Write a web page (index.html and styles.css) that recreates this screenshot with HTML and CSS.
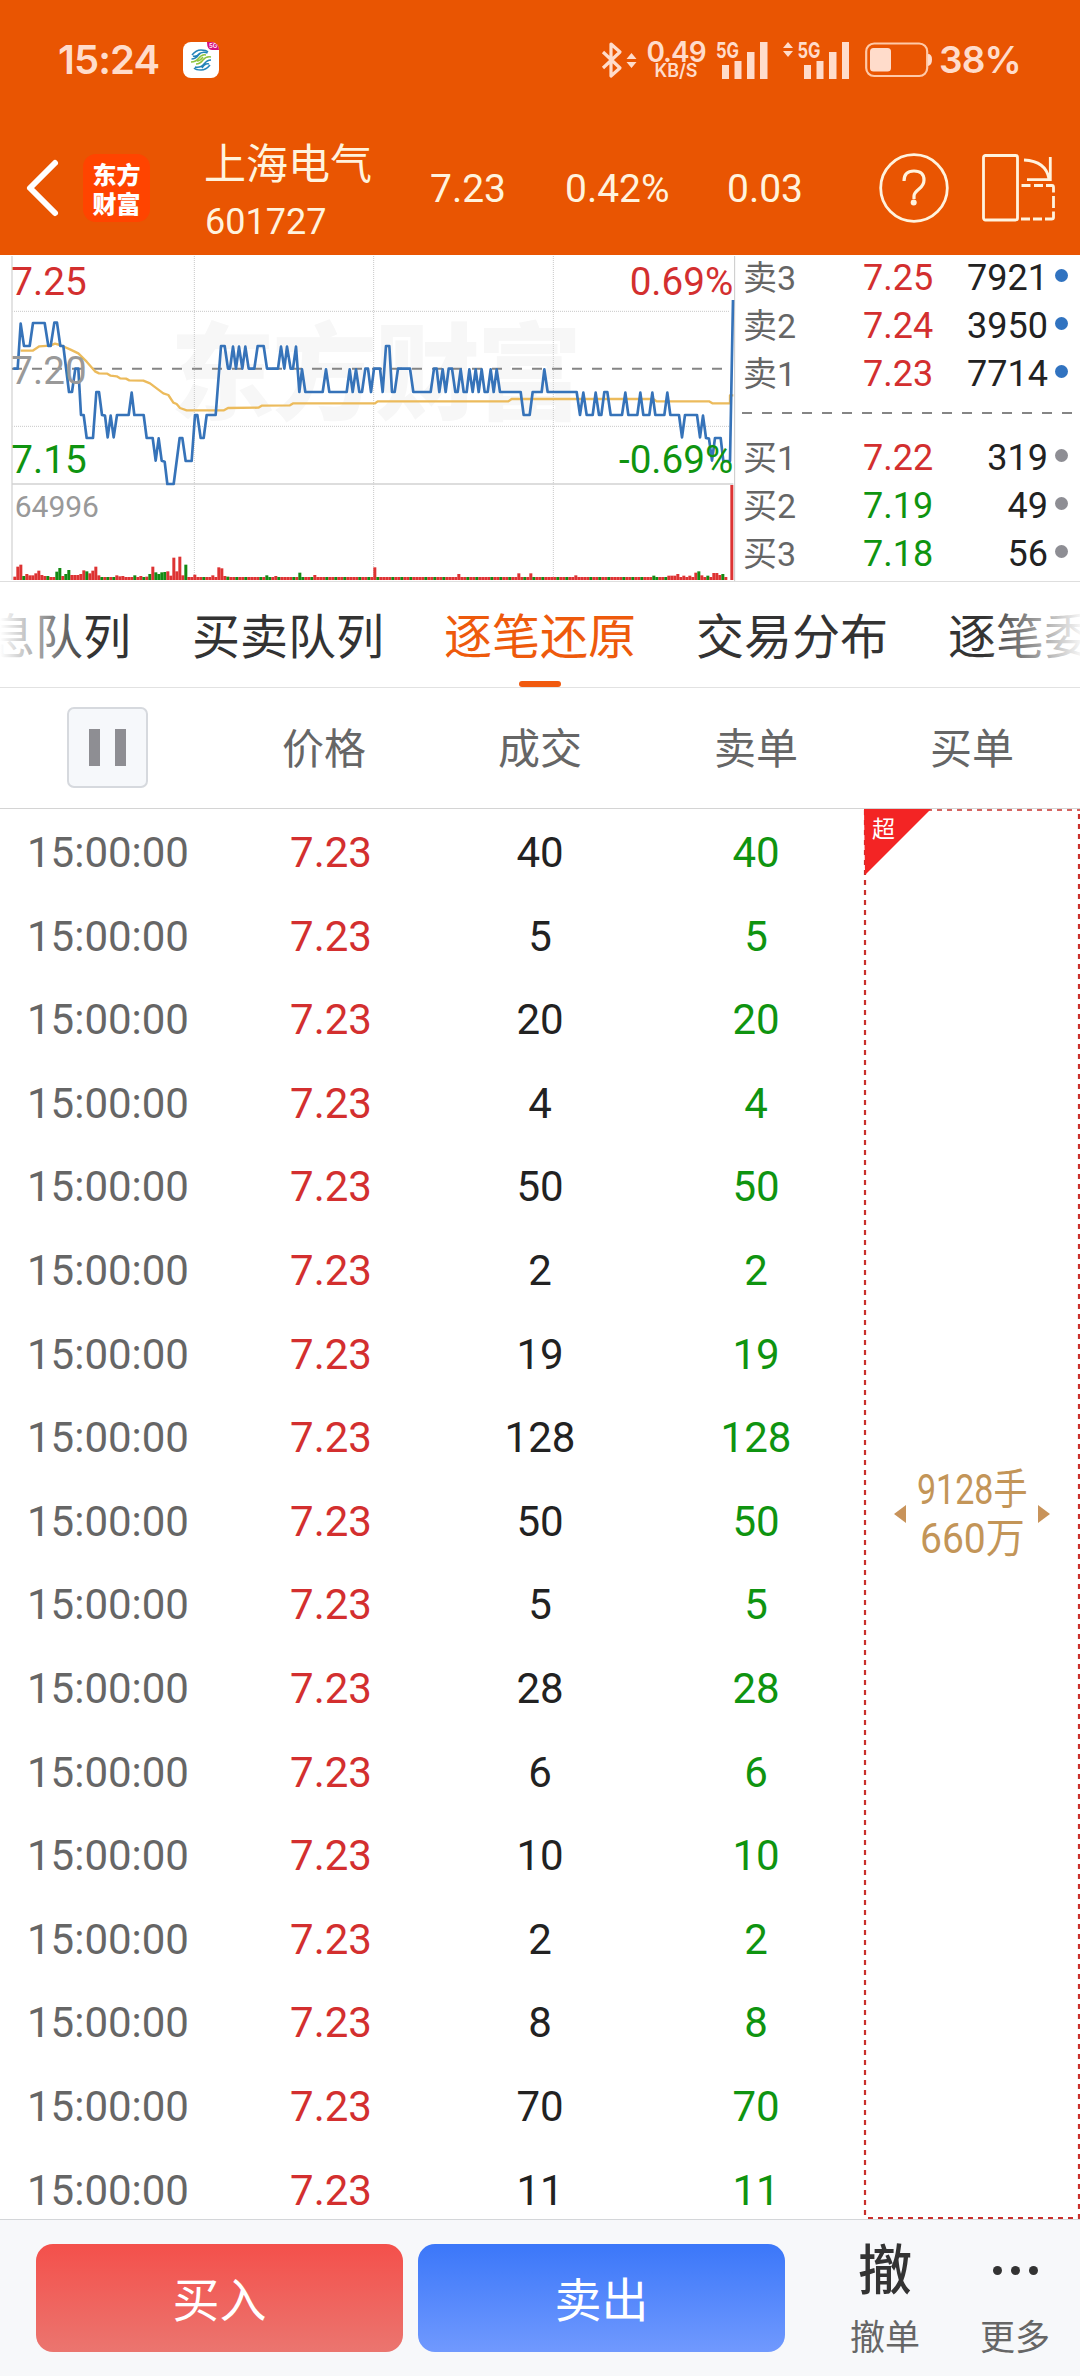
FILE: index.html
```html
<!DOCTYPE html>
<html lang="zh-CN">
<head>
    <meta charset="utf-8">
    <title>上海电气 601727</title>
    <link rel="stylesheet" href="styles.css">
</head>
<body>
    <div class="top">
        <div class="status-bar">
            <span class="clock">15:24</span>
            <svg class="app-icon" width="36" height="36" viewBox="0 0 36 36">
                <defs><clipPath id="appClip"><rect width="36" height="36" rx="8"/></clipPath></defs>
                <g clip-path="url(#appClip)">
                    <rect width="36" height="36" fill="#fff"/>
                    <path d="M24 0h12v8H29q-5 0-5-8z" fill="#d6107c"/>
                    <text x="26" y="6" font-size="6" fill="#fff">5G</text>
                </g>
                <g fill="none" stroke-width="1.5">
                    <path d="M9 13q4-5 9-5 5 0 7 2M8.500 17q4 0 7-4t9-2M10 14q4 1 7-3" stroke="#2384b8"/>
                    <path d="M8 20q5 0 8-4t7-3M13 22q4 0 7-4t8-3M14 19q3 0 6-4" stroke="#8fc440"/>
                    <path d="M27 23q-4 5-9 5-5 0-7-2M28 18q-4 0-7 4t-9 3M26 22q-4-1-7 4" stroke="#2384b8"/>
                </g>
            </svg>
            <div class="status-right">
                <svg class="bt" width="36" height="38" viewBox="0 0 36 38">
                    <path d="M2 11l17 16-9 8V3l9 8L2 27" fill="none" stroke="#ffdccb" stroke-width="3.200" stroke-linejoin="round"/>
                    <path d="M25.500 18h10l-5-6zM25.500 21h10l-5 6z" fill="#ffdccb"/>
                </svg>
                <div class="net">
                    <span class="net-num">0.49</span>
                    <span class="net-unit">KB/S</span>
                </div>
                <svg class="sig1" width="52" height="38" viewBox="0 0 52 38">
                    <text class="sig-text" x="0" y="16.500" textLength="23" lengthAdjust="spacingAndGlyphs">5G</text>
                    <path d="M6 24h7v14H6zM18.500 20h7v18h-7zM31 11h7.500v27H31zM44 1h7.500v37H44z"/>
                </svg>
                <svg class="sig2" width="68" height="38" viewBox="0 0 68 38">
                    <path d="M1 7h10L6 1zM1 10h10l-5 6z"/>
                    <text class="sig-text" x="15.500" y="16.500" textLength="23" lengthAdjust="spacingAndGlyphs">5G</text>
                    <path d="M22 24h7v14h-7zM34.500 20h7v18h-7zM47 11h7.500v27H47zM60 1h7v37h-7z"/>
                </svg>
                <svg class="battery" width="68" height="36" viewBox="0 0 68 36">
                    <rect x="1.200" y="1.500" width="61" height="32.500" rx="8" fill="none" stroke="#ffc9a8" stroke-width="2.200"/>
                    <rect x="5" y="6" width="21" height="23.500" rx="3.500"/>
                    <path d="M63 12q4 0 4 5.500T63 24z"/>
                </svg>
                <span class="percent">38%</span>
            </div>
        </div>
        <div class="header">
            <svg class="back" width="34" height="60" viewBox="0 0 34 60">
                <path d="M30 5L5 30l25 25" fill="none" stroke="#fff" stroke-width="6" stroke-linecap="round" stroke-linejoin="round"/>
            </svg>
            <div class="logo">
                <div>东方</div>
                <div>财富</div>
            </div>
            <div class="stock">
                <div class="stock-name">上海电气</div>
                <div class="stock-code">601727</div>
            </div>
            <span class="quote q-price">7.23</span>
            <span class="quote q-rate">0.42%</span>
            <span class="quote q-diff">0.03</span>
            <svg class="help" width="70" height="70" viewBox="0 0 70 70">
                <circle cx="35" cy="35" r="33.300" fill="none" stroke="#fff3de" stroke-width="2.800"/>
                <path d="M25 28q0-10 10-10t10 9q0 5-5 9t-5 7v3" fill="none" stroke="#fff3de" stroke-width="3.200"/>
                <circle cx="34.700" cy="49.500" r="3" fill="#fff3de"/>
            </svg>
            <svg class="rotate" width="74" height="68" viewBox="0 0 74 68" fill="none" stroke="#fff3de" stroke-width="2.800">
                <rect x="1.500" y="1.500" width="34" height="64.500" rx="2"/>
                <path d="M42 6q22 1 25 19M68.300 3v22.700H45"/>
                <path d="M39.500 31.500h9M52 31.500h9M64 31.500h6q1.500 0 1.500 2v5M71.500 42v12M71.500 57.500v6q0 1.500-2 1.500H63M60 65h-9M48 65h-9"/>
            </svg>
        </div>
    </div>

    <div class="market">
        <!-- 分时图，坐标放大3倍 -->
        <svg class="chart" width="738" height="326" viewBox="0 15 2214 978">
            <text class="watermark" x="510" y="483" textLength="1236">东方财富</text>
            <g stroke="#c8c8c8" stroke-width="3" stroke-dasharray="3 3">
                <path d="M36 184H2190M36 529H2190M583 18V990M1121 18V990M1660 18V990"/>
            </g>
            <path d="M36 18V990" stroke="#dedede" stroke-width="5"/>
            <path d="M2204 18V993" stroke="#c8c8c8" stroke-width="3"/>
            <path d="M36 702H2200" stroke="#d2d2d2" stroke-width="5"/>
            <path d="M36 356H2180" stroke="#858585" stroke-width="6" stroke-dasharray="30 30"/>
            <polyline class="avg" points="62,302 98,302 118,289 150,287 165,281 180,285 210,298 235,310 260,335 285,364 297,370 322,371 332,377 350,379 360,385 378,386 388,391 430,392 450,400 490,430 505,435 520,458 530,462 540,474 560,481 672,481 684,474 775,473 785,467 870,466 880,460 1125,460 1133,454 1525,454 1535,447 1960,447 1970,454 2127,454 2137,460 2190,460 2190,436 2200,436"/>
            <polyline class="price" points="40,356 53,356 62,221 72,288 89,288 99,219 134,219 145,288 152,288 163,218 171,218 181,288 190,288 207,426 216,426 226,356 235,356 243,495 251,495 260,564 279,564 289,426 297,426 306,495 315,497 323,562 332,497 341,562 351,495 386,495 395,428 403,495 431,495 440,564 458,564 467,632 476,565 485,632 494,635 502,702 521,702 539,564 547,564 557,633 575,633 585,495 592,495 602,564 611,564 620,495 647,495 663,288 674,288 684,356 690,356 699,290 708,356 717,290 727,356 736,290 746,356 763,356 773,288 791,288 801,356 834,356 843,290 853,356 861,290 872,356 879,356 888,290 898,426 906,358 916,426 968,426 978,358 988,426 1040,426 1049,358 1058,426 1068,358 1078,426 1086,426 1096,356 1104,356 1113,426 1122,356 1140,356 1148,426 1158,288 1168,288 1176,426 1184,426 1194,356 1230,356 1240,426 1292,426 1302,356 1310,356 1318,426 1328,358 1337,426 1346,356 1356,356 1366,426 1373,426 1382,358 1391,426 1400,426 1408,358 1418,426 1427,358 1436,426 1445,358 1454,426 1463,426 1472,358 1481,426 1490,358 1500,426 1562,426 1571,495 1589,495 1598,426 1625,426 1633,358 1643,426 1730,426 1740,495 1750,428 1760,495 1778,495 1787,428 1797,495 1804,495 1813,426 1822,426 1832,495 1866,495 1876,428 1885,495 1912,495 1921,428 1930,495 1948,495 1957,428 1966,495 1993,495 2002,428 2011,495 2037,495 2046,562 2055,495 2091,495 2100,562 2109,497 2118,564 2127,566 2136,632 2145,564 2162,564 2170,633 2190,633 2199,150"/>
            <g id="volume"></g>
            <g class="chart-label">
                <text x="34" y="134" fill="#d32f2f">7.25</text>
                <text x="34" y="401" fill="#999">7.20</text>
                <text x="34" y="668" fill="#0f9410">7.15</text>
                <text x="2200" y="134" fill="#d32f2f" text-anchor="end">0.69%</text>
                <text x="2200" y="668" fill="#0f9410" text-anchor="end">-0.69%</text>
                <text class="vol-label" x="44" y="800" fill="#999">64996</text>
            </g>
        </svg>
        <div class="book">
            <div class="book-row"><span>卖3</span><b class="red">7.25</b><i>7921</i><em></em></div>
            <div class="book-row"><span>卖2</span><b class="red">7.24</b><i>3950</i><em></em></div>
            <div class="book-row"><span>卖1</span><b class="red">7.23</b><i>7714</i><em></em></div>
            <div class="book-line"></div>
            <div class="book-row buy"><span>买1</span><b class="red">7.22</b><i>319</i><em></em></div>
            <div class="book-row buy"><span>买2</span><b class="green">7.19</b><i>49</i><em></em></div>
            <div class="book-row buy"><span>买3</span><b class="green">7.18</b><i>56</i><em></em></div>
        </div>
    </div>

    <div class="tabs">
        <span>息队列</span>
        <span>买卖队列</span>
        <span class="active">逐笔还原</span>
        <span>交易分布</span>
        <span>逐笔委</span>
    </div>

    <div class="table-head">
        <div><button class="pause"></button></div>
        <div>价格</div>
        <div>成交</div>
        <div>卖单</div>
        <div>买单</div>
    </div>

    <div class="table-body">
        <div class="rows" id="rows"></div>
        <div class="big-order">
            <svg class="border" width="216" height="1411" viewBox="0 0 216 1411" fill="none" stroke="#c9302c" stroke-dasharray="5 5">
                <path d="M3 1H216" stroke-width="1.500"/>
                <path d="M1 1V1409M215 5V1410" stroke-width="2.200"/>
                <path d="M4 1409H216" stroke-width="2"/>
                <path d="M0 0h67L1 66z" fill="#f32424" stroke="none"/>
            </svg>
            <span class="tag">超</span>
            <i class="arrow left"></i>
            <div class="order-text">
                <div class="hand">9128手</div>
                <div class="money">660万</div>
            </div>
            <i class="arrow right"></i>
        </div>
    </div>

    <div class="footer">
        <button class="btn buy-btn">买入</button>
        <button class="btn sell-btn">卖出</button>
        <div class="tool cancel">
            <div class="tool-icon">撤</div>
            <div>撤单</div>
        </div>
        <div class="tool more">
            <div class="tool-icon dots"><i></i><i></i><i></i></div>
            <div>更多</div>
        </div>
    </div>

    <script>
        // 逐笔成交
        const deals = [40, 5, 20, 4, 50, 2, 19, 128, 50, 5, 28, 6, 10, 2, 8, 70, 11];
        document.getElementById('rows').innerHTML = deals.map(n =>
            `<div class="row"><span class="time">15:00:00</span><span class="red deal-price">7.23</span><span>${n}</span><span class="green">${n}</span></div>`
        ).join('');

        // 成交量，负数为绿柱
        const volume = [10, 40, 46, -12, 18, 14, 14, 20, 28, 15, 12, -12, 9, 9, -25, -36, 12, -18, -30, 15, 15, 15, 18, 29, -26, 20, 28, 40, 14,
            -9, 9, -9, 9, -9, 14, 11, 12, 9, 9, 9, -14, 9, 12, -9, 10, -18, 40, -23, -18, -23, -24, 26, 13, 67, 26, 70, 14, -46];
        const peaks = {60: 16, 66: 14, 68: 38, 69: 35, 70: 12, 71: -10, 84: -14, 87: 12, 95: -22, 100: 15, 120: 38, 148: 18, 168: 20,
            172: 20, 187: 14, 213: -13, 218: 13, 219: 13, 220: 13, 221: 18, 223: 13, 225: 13, 227: 22, 228: -26, 229: 14,
            231: -13, 233: 21, 234: 21, 235: 15, 236: -18, 239: 285};
        let bars = '';
        for (let i = 0; i < 240; i++) {
            let v = volume[i] || peaks[i] || (i * 7 % 11 < 3 ? -9 : 9);
            let h = Math.abs(v);
            if (i === 238) continue;
            bars += `<rect x="${40 + 9 * i}" y="${990 - h}" width="9" height="${h}" fill="${v > 0 ? '#dd3333' : '#138a13'}"/>`;
        }
        document.getElementById('volume').innerHTML = bars;
    </script>
</body>
</html>
```

FILE: styles.css
```css
* {
    box-sizing: border-box;
}

body {
    margin: 0;
    width: 1080px;
    height: 2376px;
    overflow: hidden;
    background: #fff;
    color: #222;
    font-family: Roboto, "Noto Sans CJK SC", sans-serif;
    display: flex;
    flex-direction: column;
}

svg {
    display: block;
    flex: none;
    overflow: visible;
}

i, em {
    font-style: normal;
}

.red {
    color: #d32f2f;
}

.green {
    color: #0f9410;
}

/* 顶部 */
.top {
    height: 255px;
    flex: none;
    background: #e95502;
    color: #fff3de;
}

.status-bar {
    height: 120px;
    padding: 0 0 0 58px;
    display: flex;
    align-items: center;
    font-family: Inter, sans-serif;
    font-weight: 600;
    color: #ffdccb;
    fill: #ffdccb;
}

.clock {
    width: 125px;
    font-size: 40px;
    line-height: 40px;
    letter-spacing: -0.9px;
    white-space: nowrap;
}

.status-right {
    display: flex;
    align-items: center;
    margin-left: 382px;
}

.net {
    width: 64px;
    margin-left: 7px;
    display: flex;
    flex-direction: column;
    align-items: center;
}

.net-num {
    font-size: 28px;
    line-height: 22px;
    letter-spacing: -1px;
}

.net-unit {
    font-size: 18px;
    line-height: 16px;
}

.sig1 {
    margin-left: 8px;
}

.sig2 {
    margin-left: 14px;
}

.sig-text {
    font-size: 22px;
    font-weight: 700;
}

.battery {
    margin-left: 15px;
}

.percent {
    margin-left: 6px;
    font-size: 37px;
    line-height: 38px;
    letter-spacing: -0.9px;
}

.header {
    height: 135px;
    display: flex;
    align-items: center;
    padding-left: 25px;
}

.logo {
    width: 67px;
    height: 68px;
    margin-left: 24px;
    padding-top: 5px;
    border-radius: 13px;
    background: #ff4400;
    color: #fff;
    font-family: "Noto Sans CJK SC", sans-serif;
    font-size: 24px;
    font-weight: 900;
    line-height: 29px;
    text-align: center;
}

.stock {
    width: 226px;
    margin-left: 54px;
}

.stock-name {
    font-size: 42px;
    line-height: 60px;
    padding-top: 8px;
}

.stock-code {
    font-size: 36px;
    line-height: 54px;
    padding-left: 1px;
}

.quote {
    font-size: 39px;
    line-height: 60px;
    padding-top: 3px;
}

.q-price {
    width: 135px;
}

.q-rate {
    width: 162px;
}

.q-diff {
    width: 152px;
}

.rotate {
    margin-left: 33px;
}

/* 行情 */
.market {
    height: 327px;
    flex: none;
    display: flex;
    border-bottom: 1px solid #dedede;
}

.chart {
    font-family: Roboto, sans-serif;
}

.watermark {
    font-family: "Noto Sans CJK SC", sans-serif;
    font-size: 315px;
    font-weight: 900;
    fill: #f7f7f7;
}

.avg, .price {
    fill: none;
    stroke-linejoin: round;
}

.avg {
    stroke: #ecbb5c;
    stroke-width: 7;
}

.price {
    stroke: #3673b9;
    stroke-width: 8;
}

.chart-label {
    font-size: 116px;
}

.vol-label {
    font-size: 90px;
}

.book {
    width: 342px;
    margin-top: -1px;
}

.book-row {
    height: 48px;
    padding-left: 5px;
    display: flex;
    align-items: center;
    font-size: 36px;
    line-height: 48px;
}

.book-row span {
    width: 120px;
    color: #666;
    font-size: 34px;
}

.book-row b {
    width: 80px;
    font-weight: 400;
}

.book-row i {
    width: 105px;
    text-align: right;
}

.book-row em {
    width: 13px;
    height: 13px;
    margin-left: 7px;
    margin-bottom: 5px;
    border-radius: 50%;
    background: #3173c0;
}

.book-row.buy em {
    background: #8e8e94;
}

.book-line {
    height: 2px;
    margin: 14px 8px 20px 4px;
    background: repeating-linear-gradient(90deg, #858585 0 10px, transparent 10px 20px);
}

/* 标签页 */
.tabs {
    height: 106px;
    flex: none;
    display: flex;
    gap: 60px;
    overflow: hidden;
    border-bottom: 1px solid #e2e2e2;
    position: relative;
    font-family: "Noto Sans CJK SC", sans-serif;
    font-size: 48px;
    line-height: 102px;
    color: #333;
    white-space: nowrap;
}

.tabs span {
    flex: none;
}

.tabs span:first-child {
    margin-left: -13px;
    margin-right: 1px;
}

.tabs .active {
    color: #ee5a0c;
    position: relative;
}

.tabs .active::after {
    content: "";
    position: absolute;
    left: 75px;
    bottom: 0;
    width: 42px;
    height: 6px;
    border-radius: 3px;
    background: #f15a0f;
}

.tabs::after {
    content: "";
    position: absolute;
    inset: 0;
    background: linear-gradient(90deg, #fff 0, transparent 88px, transparent 985px, #fff 1085px);
}

/* 表格 */
.table-head {
    height: 121px;
    flex: none;
    display: flex;
    border-bottom: 1px solid #d4d4d4;
    font-size: 42px;
    line-height: 124px;
    color: #666;
    text-align: center;
}

.table-head div {
    width: 216px;
}

.pause {
    width: 81px;
    height: 81px;
    margin: 19px 0 0 -1px;
    border: 2px solid #d6d9de;
    border-radius: 7px;
    background:
        linear-gradient(#8e8e93, #8e8e93) 20px 20px / 11px 37px no-repeat,
        linear-gradient(#8e8e93, #8e8e93) 46px 20px / 11px 37px no-repeat,
        #f6f8fb;
    display: inline-block;
    vertical-align: top;
}

.table-body {
    height: 1410px;
    flex: none;
    display: flex;
    overflow: hidden;
}

.rows {
    width: 864px;
    padding-top: 2px;
}

.row {
    display: flex;
    height: 83.6px;
    font-size: 42px;
    line-height: 84px;
    text-align: center;
}

.row span {
    width: 216px;
}

.row .time {
    color: #666;
}

.row .deal-price {
    padding-left: 14px;
}

.big-order {
    width: 216px;
    position: relative;
    display: flex;
    align-items: center;
    justify-content: center;
    color: #c39558;
}

.big-order .border {
    position: absolute;
    left: 0;
    top: 0;
}

.tag {
    position: absolute;
    left: 8px;
    top: 4px;
    color: #fff;
    font-size: 23px;
    line-height: 34px;
}

.order-text {
    width: 132px;
    font-size: 42px;
    line-height: 49px;
    white-space: nowrap;
    display: flex;
    flex-direction: column;
    align-items: center;
}

.hand {
    transform: scaleX(0.81);
}

.money {
    transform: scaleX(0.93);
}

.arrow {
    border: 9px solid transparent;
}

.arrow.left {
    border-left: 0;
    border-right: 12px solid #c8935a;
}

.arrow.right {
    border-right: 0;
    border-left: 12px solid #c8935a;
}

/* 底部 */
.footer {
    height: 157px;
    flex: none;
    display: flex;
    border-top: 1px solid #d4d6d9;
    background: #f7f8fa;
    padding: 24px 0 0 36px;
}

.btn {
    width: 367px;
    height: 108px;
    margin-right: 15px;
    padding: 0 0 4px;
    border: none;
    border-radius: 17px;
    color: #fff;
    font-family: "Noto Sans CJK SC", sans-serif;
    font-size: 47px;
}

.buy-btn {
    background: linear-gradient(#f4504b, #eb756f);
}

.sell-btn {
    background: linear-gradient(#3b77f9, #7099fe);
}

.tool {
    width: 130px;
    color: #666;
    font-size: 35px;
    line-height: 50px;
    text-align: center;
}

.cancel {
    margin-left: 20px;
}

.tool-icon {
    height: 70px;
    color: #333;
    font-size: 54px;
    font-weight: 500;
    line-height: 56px;
}

.dots {
    display: flex;
    justify-content: center;
    gap: 9px;
    padding-top: 22px;
}

.dots i {
    width: 9px;
    height: 9px;
    border-radius: 50%;
    background: #333;
}
```
